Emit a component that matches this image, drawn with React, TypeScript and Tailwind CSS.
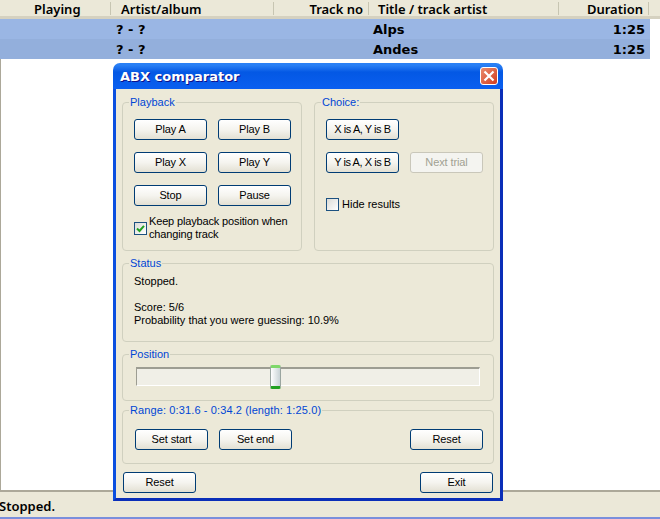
import React from "react";

const FONT = "font-['Liberation_Sans',sans-serif] text-[11px] leading-[13px]";

function Btn({ children, w = "w-[73px]", disabled = false, tight = false }: { children: React.ReactNode; w?: string; disabled?: boolean; tight?: boolean }) {
  const spacing = tight ? "tracking-[-0.45px]" : "tracking-[-0.1px]";
  return (
    <button
      className={
        disabled
          ? `${w} h-[21px] rounded-[3px] border border-[#c9c7ba] bg-[#f4f4f0] text-[#a1a192] text-[11px] leading-[13px] ${spacing}`
          : `${w} h-[21px] rounded-[3px] border border-[#003c74] bg-gradient-to-b from-[#ffffff] via-[#f5f4ef] to-[#e3e0d3] text-black text-[11px] leading-[13px] ${spacing}`
      }
    >
      {children}
    </button>
  );
}

function Group({ title, className = "", legendClass = "", children }: { title: string; className?: string; legendClass?: string; children: React.ReactNode }) {
  return (
    <fieldset className={`min-w-0 border border-[#d0d0bf] rounded-[4px] ${className}`}>
      <legend className={`ml-[6px] px-[1px] text-[#0046d5] text-[11px] leading-[13px] ${legendClass}`}>{title}</legend>
      {children}
    </fieldset>
  );
}

function Check({ checked = false }: { checked?: boolean }) {
  return (
    <span className="w-[13px] h-[13px] shrink-0 border border-[#1c5180] bg-gradient-to-br from-[#dcdcd7] to-[#ffffff] flex items-center justify-center">
      {checked && (
        <svg width="9" height="9" viewBox="0 0 9 9">
          <path d="M1 4.5 L3.5 7 L8 1.8" fill="none" stroke="#21a121" strokeWidth="2" />
        </svg>
      )}
    </span>
  );
}

const headers = [
  { t: "Playing", w: "w-[111px]", c: "justify-start pl-[34px]" },
  { t: "Artist/album", w: "w-[163px]", c: "justify-start pl-[10px]" },
  { t: "Track no", w: "w-[95px]", c: "justify-end pr-[5px]" },
  { t: "Title / track artist", w: "w-[190px]", c: "justify-start pl-[9px]" },
  { t: "Duration", w: "w-[90px]", c: "justify-end pr-[5px]" },
];

function Row({ title, bg }: { title: string; bg: string }) {
  return (
    <div className={`flex h-[20px] w-[650px] -ml-[1px] items-center pt-[1px] text-[13px] font-bold text-black ${bg}`}>
      <span className="w-[116px]" />
      <span className="w-[257px]">? - ?</span>
      <span className="w-[200px]">{title}</span>
      <span className="w-[72px] text-right">1:25</span>
    </div>
  );
}

export default function App() {
  return (
    <div className="relative w-[660px] h-[519px] overflow-hidden bg-white flex flex-col font-['DejaVu_Sans',sans-serif]">
      <div className="h-[19px] flex bg-[#ebe8d8] border-b-[3px] border-[#d5d1c0] shrink-0 font-['Noto_Sans',sans-serif]">
        {headers.map((h) => (
          <div key={h.t} className={`${h.w} h-[13px] mt-[2px] pt-[2px] flex items-center border-r border-[#c7c5b2] ${h.c} text-[13px] font-semibold text-black whitespace-nowrap`}>
            {h.t}
          </div>
        ))}
      </div>
      <div className="flex-1 border-l border-[#aca899] flex flex-col">
        <Row title="Alps" bg="bg-[#9ab6e4]" />
        <Row title="Andes" bg="bg-[#93afdc]" />
      </div>
      <div className="h-[29px] shrink-0 border-t-2 border-[#aca899] bg-[#ebe8d8] flex flex-col">
        <div className="flex-1 font-['Noto_Sans',sans-serif] text-[13px] font-semibold text-black -ml-[1px] pt-[7px] leading-[15px]">Stopped.</div>
        <div className="h-[2px] bg-[#7a8fdc]" />
      </div>

      <div className={`absolute left-[113px] top-[63px] w-[390px] h-[438px] flex flex-col ${FONT}`}>
        <div className="h-[26px] shrink-0 rounded-t-[7px] bg-gradient-to-b from-[#2a80f5] from-[8%] via-[#0458e4] via-[35%] to-[#0a5ff0] flex items-center justify-between pl-[7px] pr-[5px]">
          <span className="mt-[1px] font-['DejaVu_Sans',sans-serif] text-[13px] font-bold text-white [text-shadow:1px_1px_0_#0f1089]">ABX comparator</span>
          <span className="w-[18px] h-[18px] rounded-[3px] border border-white bg-gradient-to-br from-[#e98a6c] to-[#d2391c] flex items-center justify-center">
            <svg width="14" height="14" viewBox="0 0 14 14">
              <path d="M2.5 2.5 L11.5 11.5 M11.5 2.5 L2.5 11.5" stroke="#fff" strokeWidth="2.2" />
            </svg>
          </span>
        </div>
        <div className="flex-1 border-l-[3px] border-r-[3px] border-b-[3px] border-l-[#0a4fe0] border-r-[#0a2eb8] border-b-[#0a2eb8] bg-[#ece9d8] px-[6px] pt-[7px] flex flex-col">
          <div className="flex gap-[12px] h-[155px] shrink-0">
            <Group title="Playback" className="w-[180px] h-[155px]">
              <div className="grid grid-cols-[73px_73px] gap-x-[11px] gap-y-[12px] mt-[10px] ml-[11px]">
                <Btn>Play A</Btn>
                <Btn>Play B</Btn>
                <Btn>Play X</Btn>
                <Btn>Play Y</Btn>
                <Btn>Stop</Btn>
                <Btn>Pause</Btn>
              </div>
              <div className="flex items-center gap-[2px] mt-[9px] ml-[11px] whitespace-nowrap">
                <Check checked />
                <span className="tracking-[-0.15px]">Keep playback position when<br />changing track</span>
              </div>
            </Group>
            <Group title="Choice:" className="w-[180px] h-[155px]">
              <div className="grid grid-cols-[73px_73px] gap-x-[11px] gap-y-[12px] mt-[10px] ml-[11px]">
                <Btn tight>X is A, Y is B</Btn>
                <span />
                <Btn tight>Y is A, X is B</Btn>
                <Btn disabled>Next trial</Btn>
              </div>
              <div className="flex items-center gap-[3px] mt-[25px] ml-[11px]">
                <Check />
                <span>Hide results</span>
              </div>
            </Group>
          </div>
          <Group title="Status" className="h-[85px] mt-[6px] shrink-0">
            <div className="mt-[5px] ml-[11px]">Stopped.</div>
            <div className="mt-[13px] ml-[11px]">Score: 5/6</div>
            <div className="ml-[11px]">Probability that you were guessing: 10.9%</div>
          </Group>
          <Group title="Position" className="h-[53px] mt-[6px] shrink-0">
            <div className="relative h-[19px] mt-[6px] ml-[13px] w-[344px] bg-[#f0efe7] border-t-2 border-l border-[#9d9d92] border-r border-b border-r-white border-b-white">
              <span className="absolute left-[133px] -top-[4px] w-[11px] h-[24px] rounded-[2px] border border-[#9aa5a0] border-y-[3px] border-t-[#7fd86a] border-b-[#21a121] bg-gradient-to-r from-[#ffffff] to-[#c9d3d6]" />
            </div>
          </Group>
          <Group title="Range: 0:31.6 - 0:34.2 (length: 1:25.0)" legendClass="tracking-[0.12px]" className="h-[60px] mt-[3px] shrink-0">
            <div className="flex gap-[11px] mt-[12px] ml-[12px] mr-[10px]">
              <Btn>Set start</Btn>
              <Btn>Set end</Btn>
              <span className="flex-1" />
              <Btn>Reset</Btn>
            </div>
          </Group>
          <div className="flex justify-between mt-[8px] px-[1px] shrink-0">
            <Btn>Reset</Btn>
            <Btn>Exit</Btn>
          </div>
        </div>
      </div>
    </div>
  );
}
